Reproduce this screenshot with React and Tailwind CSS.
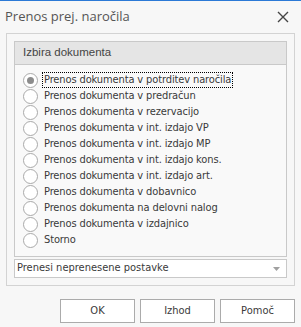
import React, { useState } from 'react';

const options = [
  'Prenos dokumenta v potrditev naročila',
  'Prenos dokumenta v predračun',
  'Prenos dokumenta v rezervacijo',
  'Prenos dokumenta v int. izdajo VP',
  'Prenos dokumenta v int. izdajo MP',
  'Prenos dokumenta v int. izdajo kons.',
  'Prenos dokumenta v int. izdajo art.',
  'Prenos dokumenta v dobavnico',
  'Prenos dokumenta na delovni nalog',
  'Prenos dokumenta v izdajnico',
  'Storno',
];

const Radio = ({ checked }) => (
  <span className="w-[15px] h-[15px] rounded-full border border-[#a9a9a9] bg-white flex items-center justify-center shrink-0">
    {checked && <span className="w-[7px] h-[7px] rounded-full bg-[#8c8c8c]" />}
  </span>
);

export default function App() {
  const [selected, setSelected] = useState(0);

  return (
    <div className="w-[301px] h-[327px] bg-[#f7f7f7] border-t border-[#2b79d6] flex flex-col font-['DejaVu_Sans_Condensed','Liberation_Sans',sans-serif] text-[#333]">
      {/* Title bar */}
      <div className="h-[32px] flex items-center justify-between pl-[5px] pr-[12px]">
        <span className="font-['Open_Sans',sans-serif] text-[13px] text-[#555]">Prenos prej. naročila</span>
        <svg width="12" height="12" viewBox="0 0 12 12">
          <path d="M1 1 L11 11 M11 1 L1 11" stroke="#444" strokeWidth="1.4" />
        </svg>
      </div>

      {/* Outer panel */}
      <div className="mx-[6px] border border-[#d3d3d3] px-[7px] pt-[7px] pb-[7px] flex flex-col">
        {/* Group box */}
        <div className="border border-[#c9c9c9] bg-[#f9f9f9]">
          <div className="h-[23px] bg-[#e5e5e5] border-b border-[#c9c9c9] flex items-center pl-[8px] font-['Liberation_Sans',sans-serif] text-[11.5px] text-[#444]">
            Izbira dokumenta
          </div>
          <div className="pl-[8px] pt-[7px] pb-[8px] flex flex-col">
            {options.map((opt, i) => (
              <div
                key={opt}
                className="h-[16px] flex items-center gap-[5px] cursor-default"
                onClick={() => setSelected(i)}
              >
                <Radio checked={selected === i} />
                <span
                  className={`text-[11px] leading-[14px] tracking-[-0.12px] text-[#3a3a3a] px-[1px] ${
                    selected === i ? 'outline outline-1 outline-dotted outline-black' : ''
                  }`}
                >
                  {opt}
                </span>
              </div>
            ))}
          </div>
        </div>

        {/* Dropdown */}
        <div className="mt-[2px] h-[19px] bg-white border border-[#c9c9c9] flex items-center justify-between pl-[2px] pr-[6px]">
          <span className="text-[11px] text-[#3a3a3a]">Prenesi neprenesene postavke</span>
          <svg width="7" height="4" viewBox="0 0 7 4">
            <path d="M0 0 L7 0 L3.5 4 Z" fill="#a0a0a0" />
          </svg>
        </div>
      </div>

      {/* Buttons */}
      <div className="flex justify-end gap-[5px] pr-[6px] mt-[13px]">
        {['OK', 'Izhod', 'Pomoč'].map((b) => (
          <button
            key={b}
            className="w-[75px] h-[24px] bg-white border border-[#ababab] text-[11px] text-[#3a3a3a]"
          >
            {b}
          </button>
        ))}
      </div>
    </div>
  );
}
